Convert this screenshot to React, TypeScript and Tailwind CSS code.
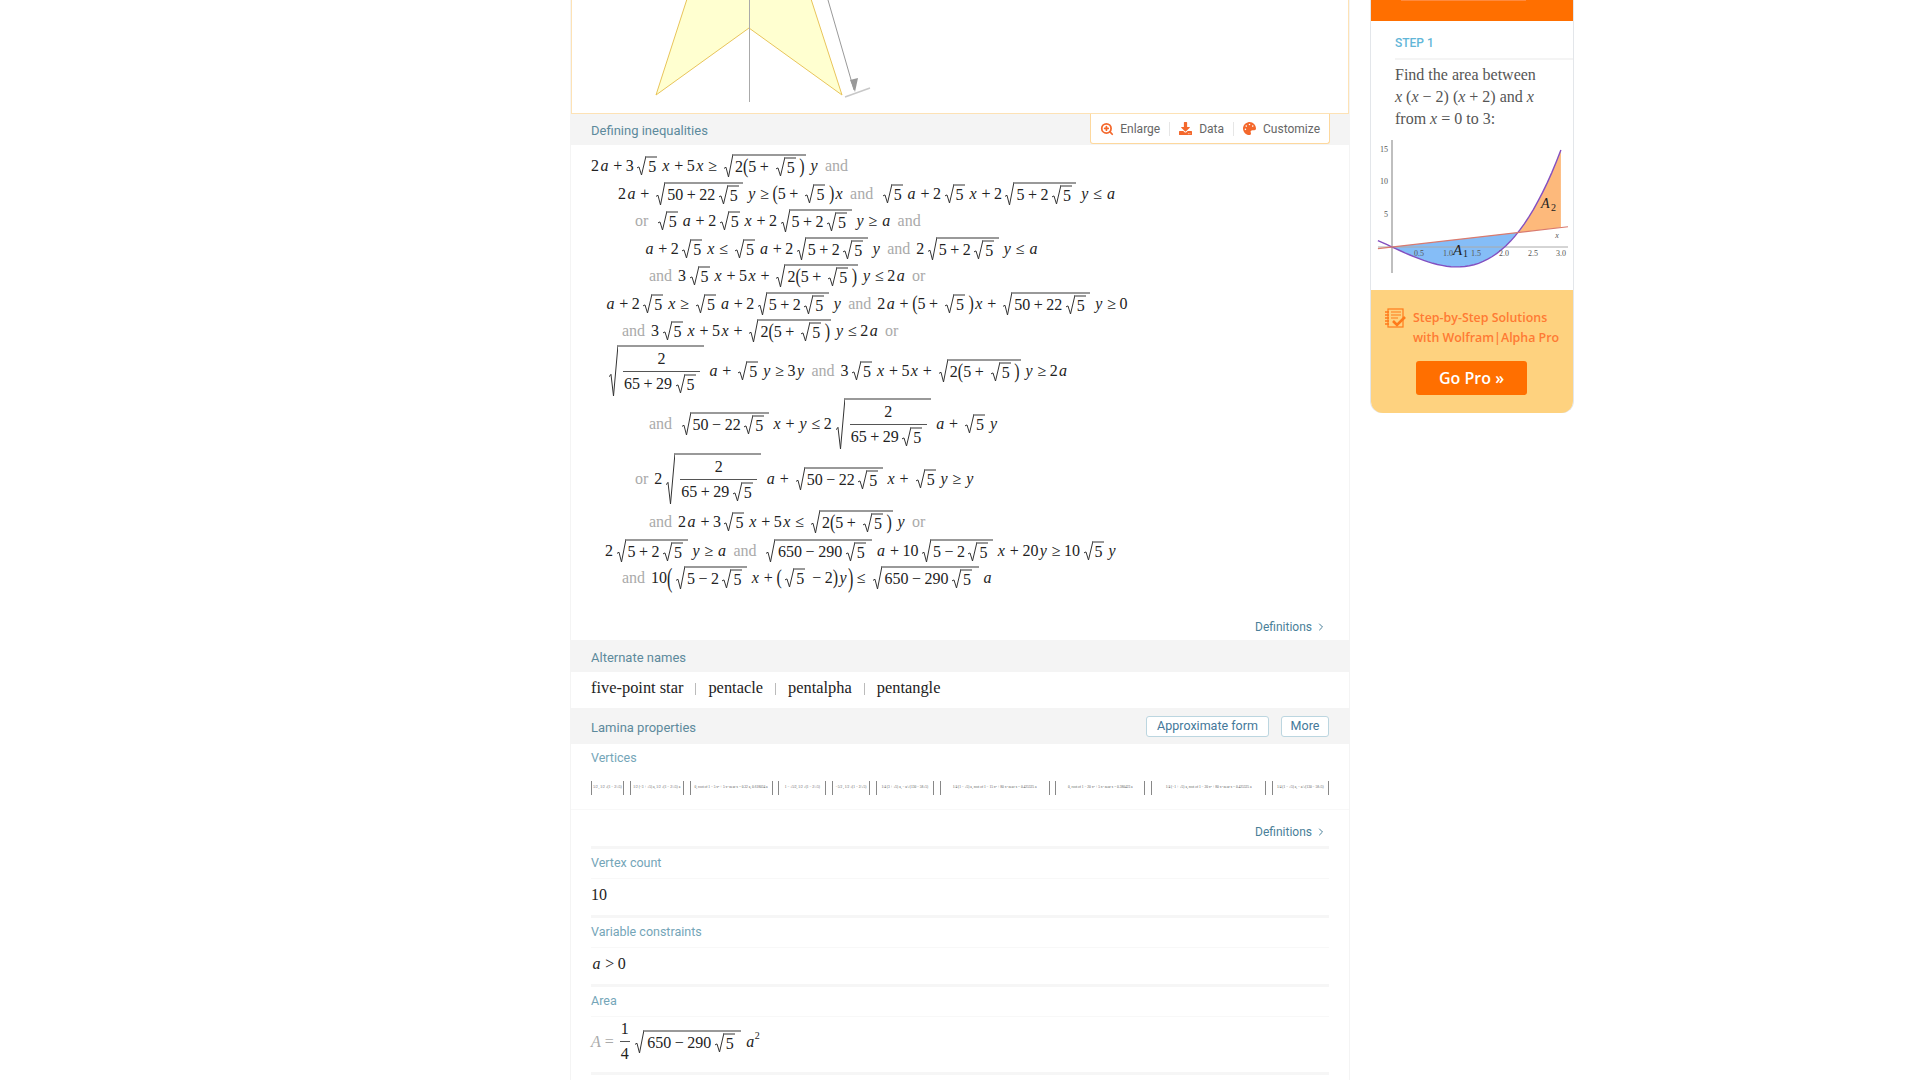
import { ChevronRight, ZoomIn } from 'lucide-react'
import type { ReactNode } from 'react'
import { FaDownload, FaPalette } from 'react-icons/fa'

const serif = { fontFamily: '"Liberation Serif", serif' }

function Sqrt({ children, pad = '' }: { children: ReactNode; pad?: string }) {
  return (
    <span className="inline-flex items-stretch">
      <span className="relative w-[9px] shrink-0">
        <svg className="absolute inset-0 h-full w-full" viewBox="0 0 10 20" preserveAspectRatio="none">
          <path d="M0 12.5 L2.2 11.5 L5 20 L10 0" fill="none" stroke="#333" strokeWidth={1} vectorEffect="non-scaling-stroke" />
        </svg>
      </span>
      <span className={`flex items-center border-t-2 border-[#999] pl-[2px] pr-[1px] ${pad}`}>{children}</span>
    </span>
  )
}

function Frac({ top, bottom, wide }: { top: ReactNode; bottom: ReactNode; wide?: boolean }) {
  return (
    <span className={`inline-flex flex-col items-center ${wide ? 'mx-[3px]' : 'mx-[2px]'}`}>
      <span className="flex h-[24px] items-center px-[1px]">{top}</span>
      <span className="flex h-[25px] items-center border-t border-[#555] px-[1px]">{bottom}</span>
    </span>
  )
}

const parts: Record<string, string> = {
  T: '2 ( 5 + R )',
  U: '5 + 2 R',
  W: '50 + 22 R',
  Z: '50 − 22 R',
  Q: '650 − 290 R',
  P: '5 − 2 R',
}

// one token per word: digits, variables, operators, or a named radical from parts
function Token({ t }: { t: string }) {
  if (t === 'R') return <span className="mx-[3.5px] inline-flex"><Sqrt>5</Sqrt></span>
  if (t === 'F')
    return (
      <span className="mx-[4px] inline-flex">
        <Sqrt>
          <Frac top="2" bottom={<Expr s="65 + 29 R" />} wide />
        </Sqrt>
      </span>
    )
  if (t === 'Q4') return <Frac top="1" bottom="4" />
  if (parts[t])
    return (
      <span className="mx-[3.5px] inline-flex">
        <Sqrt pad={t === 'Q' ? 'pt-[1px] pb-[1px] pl-[3px] pr-[3px]' : 'pt-[1px] pb-[1px]'}>
          <Expr s={parts[t]} />
        </Sqrt>
      </span>
    )
  if (t === 'and' || t === 'or') return <span className="mx-[6px] text-[#aaa]">{t}</span>
  if (['+', '−', '≥', '≤', '=', '>'].includes(t)) return <span className="mx-[3.5px]">{t}</span>
  if (t === '(' || t === ')') return <span className="inline-block origin-center scale-y-125 font-light">{t}</span>
  if (t === 'L' || t === 'J')
    return <span className="inline-block origin-center scale-y-[1.7] font-light">{t === 'L' ? '(' : ')'}</span>
  if (/^[axyA]$/.test(t)) return <span className="mx-[1.4px] italic">{t}</span>
  return <span>{t}</span>
}

function Expr({ s }: { s: string }) {
  return (
    <span className="inline-flex items-center whitespace-pre">
      {s.split(' ').map((t, i) => (
        <Token key={i} t={t} />
      ))}
    </span>
  )
}

const lines: [string, string, string][] = [
  ['ml-0', 'h-[27.5px]', '2 a + 3 R x + 5 x ≥ T y and'],
  ['ml-[27px]', 'h-[27.5px]', '2 a + W y ≥ ( 5 + R ) x and R a + 2 R x + 2 U y ≤ a'],
  ['ml-[38px]', 'h-[27.5px]', 'or R a + 2 R x + 2 U y ≥ a and'],
  ['ml-[53px]', 'h-[27.5px]', 'a + 2 R x ≤ R a + 2 U y and 2 U y ≤ a'],
  ['ml-[52px]', 'h-[27.5px]', 'and 3 R x + 5 x + T y ≤ 2 a or'],
  ['ml-[14px]', 'h-[27.5px]', 'a + 2 R x ≥ R a + 2 U y and 2 a + ( 5 + R ) x + W y ≥ 0'],
  ['ml-[25px]', 'h-[27.5px]', 'and 3 R x + 5 x + T y ≤ 2 a or'],
  ['ml-[14px]', 'h-[51px]', 'F a + R y ≥ 3 y and 3 R x + 5 x + T y ≥ 2 a'],
  ['ml-[52px]', 'h-[55px]', 'and Z x + y ≤ 2 F a + R y'],
  ['ml-[38px]', 'h-[55px]', 'or 2 F a + Z x + R y ≥ y'],
  ['ml-[52px]', 'h-[31px]', 'and 2 a + 3 R x + 5 x ≤ T y or'],
  ['ml-[14px]', 'h-[27.5px]', '2 U y ≥ a and Q a + 10 P x + 20 y ≥ 10 R y'],
  ['ml-[25px]', 'h-[27.5px]', 'and 10 L P x + ( R − 2 ) y J ≤ Q a'],
]

function HeaderLabel({ children }: { children: ReactNode }) {
  return <span className="pt-[4px] text-[13px] text-[#5d8a9c]">{children}</span>
}

function Definitions({ className }: { className: string }) {
  return (
    <div className={`flex items-center justify-end pr-[22px] text-[12px] text-[#4a7f99] ${className}`}>
      Definitions <ChevronRight className="ml-[3px] h-[12px] w-[12px]" strokeWidth={2} />
    </div>
  )
}

function Section({ label, height, children }: { label: string; height: string; children: ReactNode }) {
  return (
    <div className={`flex flex-col ${height}`}>
      <div className="mx-[20px] flex h-[30px] items-center border-b border-[#f8f8f8] pt-[1px] text-[12.5px] text-[#74a5b8]">{label}</div>
      <div className="flex flex-1 items-center px-[20px] pb-[4px] text-[16px] leading-[17px] text-[#222]" style={serif}>
        {children}
      </div>
      <div className="mx-[20px] h-[3px] bg-[#f6f6f6]" />
    </div>
  )
}

const vertices: [string, string][] = [
  ['w-[33px]', '5/2 , 1/2 √(1 − 2/√5)'],
  ['w-[54px]', '1/2 (−3 + √5) a, 1/2 √(1 − 2/√5) a'],
  ['w-[83px]', '0, root of 1 − 5 x² + 5 x⁴ near x = 0.32 a, 0.618034 a'],
  ['w-[48px]', '1 − √5/2, 1/2 √(1 − 2/√5)'],
  ['w-[38px]', '−5/2 , 1/2 √(1 − 2/√5)'],
  ['w-[58px]', '1/4 (3 + √5) a, − a/√(130 − 58√5)'],
  ['w-[110px]', '1/4 (1 − √5) a, root of 1 − 15 x² + 80 x⁴ near x = 0.425325 a'],
  ['w-[90px]', '0, root of 1 − 20 x² + 5 x⁴ near x = 0.380423 a'],
  ['w-[115px]', '1/4 (−1 + √5) a, root of 1 − 20 x² + 80 x⁴ near x = 0.425325 a'],
  ['w-[57px]', '1/4 (1 − √5) a, − a/√(130 − 58√5)'],
]

// Plot scale for the step-by-step preview: y = x(x-2)(x+2) against y = x
const px = (x: number) => 21 + x * 56.3
const py = (y: number) => 247 - y * 6.47
const cubic = (x: number) => x * (x - 2) * (x + 2)

function curve(from: number, to: number) {
  const pts: string[] = []
  for (let i = 0; i <= 40; i++) {
    const x = from + ((to - from) * i) / 40
    pts.push(`${px(x).toFixed(1)} ${py(cubic(x)).toFixed(1)}`)
  }
  return pts.join(' L')
}

function StepPlot() {
  const root = Math.sqrt(5)
  return (
    <svg className="absolute left-[0px] top-[140px] overflow-visible" width="204" height="136" viewBox="0 140 204 136">
      <path d={`M${curve(0, root)} L${px(0)} ${py(0)} Z`} fill="#85bdf7" />
      <path d={`M${curve(root, 3)} L${px(3)} ${py(3)} Z`} fill="#fdb97b" />
      <line x1="7" y1="247" x2="197" y2="247" stroke="#aaa" />
      <line x1="21" y1="140" x2="21" y2="273" stroke="#aaa" strokeWidth={1.5} />
      <path d={`M${curve(-0.25, 3)}`} fill="none" stroke="#8450c0" strokeWidth={1.4} />
      <line x1={px(-0.25)} y1={py(-0.25)} x2="197" y2={py(3.13)} stroke="#d97a6e" strokeWidth={1.2} />
      <g fontSize="8" fill="#555" style={serif}>
        <text x="9" y="152">15</text>
        <text x="9" y="184">10</text>
        <text x="13" y="217">5</text>
        <text x="48" y="256" textAnchor="middle">0.5</text>
        <text x="77" y="256" textAnchor="middle">1.0</text>
        <text x="105" y="256" textAnchor="middle">1.5</text>
        <text x="133" y="256" textAnchor="middle">2.0</text>
        <text x="162" y="256" textAnchor="middle">2.5</text>
        <text x="190" y="256" textAnchor="middle">3.0</text>
        <text x="186" y="238" textAnchor="middle" fontStyle="italic">x</text>
      </g>
      <g fill="#222" style={serif} fontStyle="italic">
        <text x="82" y="255" fontSize="15">A</text>
        <text x="92" y="257" fontSize="10" fontStyle="normal">1</text>
        <text x="170" y="208" fontSize="14">A</text>
        <text x="180" y="211" fontSize="10" fontStyle="normal">2</text>
      </g>
    </svg>
  )
}

function NotebookIcon() {
  return (
    <svg className="h-[21px] w-[22px] shrink-0" viewBox="0 0 22 21" fill="none" stroke="#ff7a1a">
      <rect x="3" y="1" width="15" height="18" strokeWidth={1.2} />
      <path d="M0 4h4M0 7h4M0 10h4M0 13h4M0 16h4" strokeWidth={1.4} />
      <path d="M6 4h10M6 7h10M6 10h7" strokeWidth={1} />
      <path d="M8 13l4 4 8-8" strokeWidth={2.6} />
    </svg>
  )
}

export default function App() {
  return (
    <div className="flex h-[1080px] w-[1920px] overflow-hidden bg-white pl-[570px]" style={{ fontFamily: 'Roboto, sans-serif' }}>
      {/* Result column */}
      <div className="w-[780px] shrink-0 border-x border-[#f4f4f4]">
        <div className="h-[114px] border-x border-b border-[#fde2b5]">
          <svg width="400" height="113" viewBox="0 0 400 113">
            <polygon points="115,-1 84,95 177,28 270,95 239,-1" fill="#ffffd0" stroke="#e8c45a" strokeWidth={1} />
            <line x1="177.5" y1="0" x2="177.5" y2="102" stroke="#aaa" />
            <line x1="256" y1="0" x2="282" y2="90" stroke="#999" />
            <polygon points="278,80 286,78 283,92" fill="#999" />
            <line x1="273" y1="97" x2="298" y2="88" stroke="#c8c8c8" strokeWidth={1.5} />
          </svg>
        </div>

        <div className="flex h-[31px] items-start justify-between bg-[#f4f4f4] pl-[20px] pr-[19px]">
          <div className="flex h-full items-center">
            <span className="pt-[3px] text-[13px] text-[#5d8a9c]">Defining inequalities</span>
          </div>
          <div className="flex h-[30px] items-center rounded-b-[3px] border-x border-b border-[#fdd89d] bg-white pl-[9px] pr-[9px] text-[12px] text-[#666]">
            <ZoomIn className="mr-[6px] h-[14px] w-[14px] text-[#f4682c]" strokeWidth={3} />
            Enlarge
            <span className="mx-[9px] h-[14px] w-px bg-[#e6e6e6]" />
            <FaDownload className="mr-[7px] h-[13px] w-[13px] text-[#f4682c]" />
            Data
            <span className="mx-[9px] h-[14px] w-px bg-[#e6e6e6]" />
            <FaPalette className="mr-[7px] h-[13px] w-[13px] text-[#f4682c]" />
            Customize
          </div>
        </div>

        <div className="pl-[20px] pt-[7px] text-[16px] leading-[17px] text-[#222]" style={serif}>
          {lines.map(([ml, h, s], i) => (
            <div key={i} className={`flex items-center ${ml} ${h}`}>
              <Expr s={s} />
            </div>
          ))}
        </div>
        <Definitions className="h-[48px] pt-[22px]" />

        <div className="flex h-[32px] items-center bg-[#f4f4f4] pl-[20px]">
          <HeaderLabel>Alternate names</HeaderLabel>
        </div>
        <div className="flex h-[36px] items-center pb-[2px] pl-[20px] text-[16.4px] text-[#222]" style={serif}>
          five-point star
          <span className="mx-[12px] h-[12px] w-px bg-[#bbb]" />
          pentacle
          <span className="mx-[12px] h-[12px] w-px bg-[#bbb]" />
          pentalpha
          <span className="mx-[12px] h-[12px] w-px bg-[#bbb]" />
          pentangle
        </div>

        <div className="flex h-[36px] items-center justify-between bg-[#f4f4f4] px-[20px]">
          <HeaderLabel>Lamina properties</HeaderLabel>
          <div className="mt-[2px] flex gap-[12px] text-[12.5px] text-[#44789a]">
            <span className="flex h-[21px] w-[123px] items-center justify-center rounded-[3px] border border-[#bcd6e0] bg-white">Approximate form</span>
            <span className="flex h-[21px] w-[48px] items-center justify-center rounded-[3px] border border-[#bcd6e0] bg-white">More</span>
          </div>
        </div>

        <div className="flex h-[29px] items-center pl-[20px] text-[12.5px] text-[#74a5b8]">Vertices</div>
        <div className="flex h-[37px] items-start justify-between border-b border-[#f8f8f8] px-[20px] pt-[8px]">
          {vertices.map(([w, s], i) => (
            <span
              key={i}
              className={`flex h-[14px] items-center justify-center overflow-hidden whitespace-nowrap border-x border-[#888] px-[1px] text-[3.5px] text-[#555] ${w}`}
              style={serif}
            >
              {s}
            </span>
          ))}
        </div>
        <Definitions className="h-[36px] pt-[8px]" />
        <div className="mx-[20px] h-[3px] bg-[#f6f6f6]" />

        <Section label="Vertex count" height="h-[69px]">10</Section>
        <Section label="Variable constraints" height="h-[69px]">
          <Expr s="a > 0" />
        </Section>
        <Section label="Area" height="h-[88px]">
          <span className="-mt-[2px] flex items-center">
            <span className="italic text-[#aaa]">A</span>
            <span className="mx-[4px] text-[#aaa]">=</span>
            <Expr s="Q4 Q a" />
            <sup className="-ml-[1px] text-[10px]">2</sup>
          </span>
        </Section>
      </div>

      {/* Step-by-step promo */}
      <div className="relative ml-[20px] h-[413px] w-[204px] shrink-0 rounded-b-[12px] border-x border-b border-[#e3e6ea]">
        <div className="h-[21px] bg-[#ff6f00] pl-[30px]">
          <div className="h-px w-[125px] bg-[#ff8a3d]" />
        </div>
        <div className="h-[269px] pl-[24px] pt-[13px]">
          <div className="border-b-2 border-[#f4f4f4] pb-[6px] text-[12px] font-medium text-[#62b6d8]">STEP 1</div>
          <div className="pt-[4px] text-[16px] leading-[22px] text-[#555]" style={serif}>
            Find the area between
            <br />
            <i>x</i> (<i>x</i> − 2) (<i>x</i> + 2) and <i>x</i>
            <br />
            from <i>x</i> = 0 to 3:
          </div>
        </div>
        <StepPlot />
        <div className="h-[123px] rounded-b-[12px] bg-[#fed27f] pt-[18px]">
          <div className="flex pl-[14px]" style={{ fontFamily: '"Open Sans", sans-serif' }}>
            <NotebookIcon />
            <div className="ml-[6px] text-[12.4px] font-semibold leading-[20px] text-[#ff7a33]">
              Step-by-Step Solutions
              <br />
              with Wolfram|Alpha Pro
            </div>
          </div>
          <div
            className="ml-[45px] mt-[13px] flex h-[34px] w-[111px] items-center justify-center rounded-[3px] bg-[#ff6f00] text-[16px] font-semibold text-white"
            style={{ fontFamily: '"Open Sans", sans-serif' }}
          >
            Go Pro »
          </div>
        </div>
      </div>
    </div>
  )
}
